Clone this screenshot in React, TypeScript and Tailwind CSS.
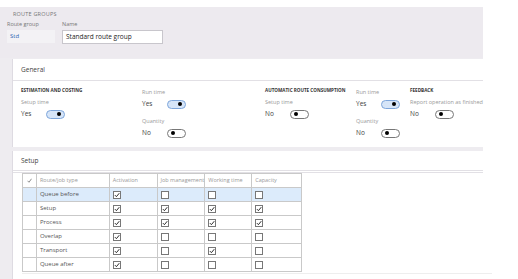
import React from "react";

function Toggle({ on }: { on: boolean }) {
  return on ? (
    <span className="flex h-[9px] w-[19px] items-center justify-end rounded-full border border-[#7ea6db] bg-[#d6e5f8] pr-[3px]">
      <span className="h-[4px] w-[4px] rounded-full bg-black" />
    </span>
  ) : (
    <span className="flex h-[9px] w-[19px] items-center justify-start rounded-full border border-[#777] bg-white pl-[3px]">
      <span className="h-[4px] w-[4px] rounded-full bg-black" />
    </span>
  );
}

function Field({ label, value, on }: { label: string; value: string; on: boolean }) {
  return (
    <div className="flex flex-col">
      <span className="h-[9px] text-[5.5px] leading-[9px] text-[#999]">{label}</span>
      <div className="mt-[1px] flex h-[12px] items-center">
        <span className="w-[25px] text-[6.5px] text-[#444]">{value}</span>
        <Toggle on={on} />
      </div>
    </div>
  );
}

function Heading({ children }: { children: React.ReactNode }) {
  return (
    <div className="mb-[4px] h-[8px] whitespace-nowrap text-[4.6px] font-bold leading-[8px] text-[#333]">
      {children}
    </div>
  );
}

function Check({ checked }: { checked: boolean }) {
  return (
    <span className="flex h-[8px] w-[8px] items-center justify-center border border-[#777] bg-white">
      {checked && (
        <svg width="6" height="6" viewBox="0 0 10 10">
          <path d="M1.5 5.2 L4 7.8 L8.8 2" fill="none" stroke="#222" strokeWidth="1.6" />
        </svg>
      )}
    </span>
  );
}

const rows = [
  { name: "Queue before", v: [true, false, false, false] },
  { name: "Setup", v: [true, true, true, true] },
  { name: "Process", v: [true, true, true, true] },
  { name: "Overlap", v: [true, false, false, false] },
  { name: "Transport", v: [true, false, true, false] },
  { name: "Queue after", v: [true, false, false, false] },
];

const cols = [
  { label: "Activation", w: "w-[48px]" },
  { label: "Job management", w: "w-[48px]" },
  { label: "Working time", w: "w-[47px]" },
  { label: "Capacity", w: "w-[50px]" },
];

export default function App() {
  return (
    <div className="h-[279px] w-[518px] overflow-hidden bg-white pt-[7px] font-['Open_Sans','Noto_Sans',sans-serif]">
      <div className="w-[483px] bg-[#eeecf0]">
        {/* page header */}
        <div className="h-[51px] bg-[#edeaef] pt-[3px]">
          <div className="pl-[13px] text-[5.5px] leading-[8px] tracking-[0.2px] text-[#777]">ROUTE GROUPS</div>
          <div className="mt-[2px] flex gap-[7px] pl-[7px]">
            <div className="flex w-[48px] flex-col">
              <span className="h-[9px] text-[5.5px] leading-[9px] text-[#777]">Route group</span>
              <span className="mt-[1px] flex h-[13px] items-center bg-[#f3f2f5] pl-[3px] text-[6px] text-[#2a64b4]">Std</span>
            </div>
            <div className="flex w-[101px] flex-col">
              <span className="h-[9px] text-[5.5px] leading-[9px] text-[#777]">Name</span>
              <span className="mt-[1px] flex h-[14px] items-center border border-[#c8c6cc] bg-white pl-[3px] text-[6.5px] text-[#222]">
                Standard route group
              </span>
            </div>
          </div>
        </div>

        {/* body */}
        <div className="flex flex-col gap-[4px] pl-[12px] pt-[1px]">
          {/* General card */}
          <div className="h-[88px] border-l border-[#dedbe2] bg-white">
            <div className="flex h-[22px] items-center border-b border-[#e2e0e5] pl-[8px] pt-[1px] text-[6.5px] text-[#444]">
              General
            </div>
            <div className="flex pl-[8px] pt-[5px]">
              <div className="flex w-[121px] flex-col">
                <Heading>ESTIMATION AND COSTING</Heading>
                <Field label="Setup time" value="Yes" on />
              </div>
              <div className="flex w-[123px] flex-col gap-[7px] pt-[2px]">
                <Field label="Run time" value="Yes" on />
                <Field label="Quantity" value="No" on={false} />
              </div>
              <div className="flex w-[91px] flex-col">
                <Heading>AUTOMATIC ROUTE CONSUMPTION</Heading>
                <Field label="Setup time" value="No" on={false} />
              </div>
              <div className="flex w-[54px] flex-col gap-[7px] pt-[2px]">
                <Field label="Run time" value="Yes" on />
                <Field label="Quantity" value="No" on={false} />
              </div>
              <div className="flex flex-col">
                <Heading>FEEDBACK</Heading>
                <Field label="Report operation as finished" value="No" on={false} />
              </div>
            </div>
          </div>

          {/* Setup card */}
          <div className="h-[140px] border-l border-[#dedbe2] bg-white">
            <div className="flex h-[22px] items-center border-b-[3px] border-double border-[#e2e0e5] pl-[8px] pt-[1px] text-[6.5px] text-[#444]">
              Setup
            </div>
            <div className="pl-[9px]">
              <div className="w-[280px] border-l border-t border-[#c9c9c9]">
                <div className="flex h-[14px] text-[5.5px] text-[#999]">
                  <div className="flex w-[14px] items-center justify-center border-b border-r border-[#c9c9c9]">
                    <svg width="5" height="5" viewBox="0 0 10 10">
                      <path d="M1 5.5 L4 8.5 L9 1.5" fill="none" stroke="#555" strokeWidth="1.3" />
                    </svg>
                  </div>
                  <div className="flex w-[73px] items-center border-b border-r border-[#c9c9c9] pl-[3px]">Route/job type</div>
                  {cols.map((c) => (
                    <div key={c.label} className={`flex ${c.w} items-center border-b border-r border-[#c9c9c9] pl-[3px]`}>
                      {c.label}
                    </div>
                  ))}
                </div>
                {rows.map((r, i) => (
                  <div
                    key={r.name}
                    className={`flex h-[14px] text-[6px] text-[#555] ${i === 0 ? "bg-[#dcebfb]" : "bg-white"}`}
                  >
                    <div className="w-[14px] border-b border-r border-[#c9c9c9]" />
                    <div className="flex w-[73px] items-center border-b border-r border-[#c9c9c9] pl-[3px]">{r.name}</div>
                    {r.v.map((v, j) => (
                      <div key={j} className={`flex ${cols[j].w} items-center border-b border-r border-[#c9c9c9] pl-[3px]`}>
                        <Check checked={v} />
                      </div>
                    ))}
                  </div>
                ))}
              </div>
              <div className="mt-[1px] h-[1px] w-[470px] bg-[#eeeeee]" />
            </div>
          </div>
        </div>
      </div>
    </div>
  );
}
